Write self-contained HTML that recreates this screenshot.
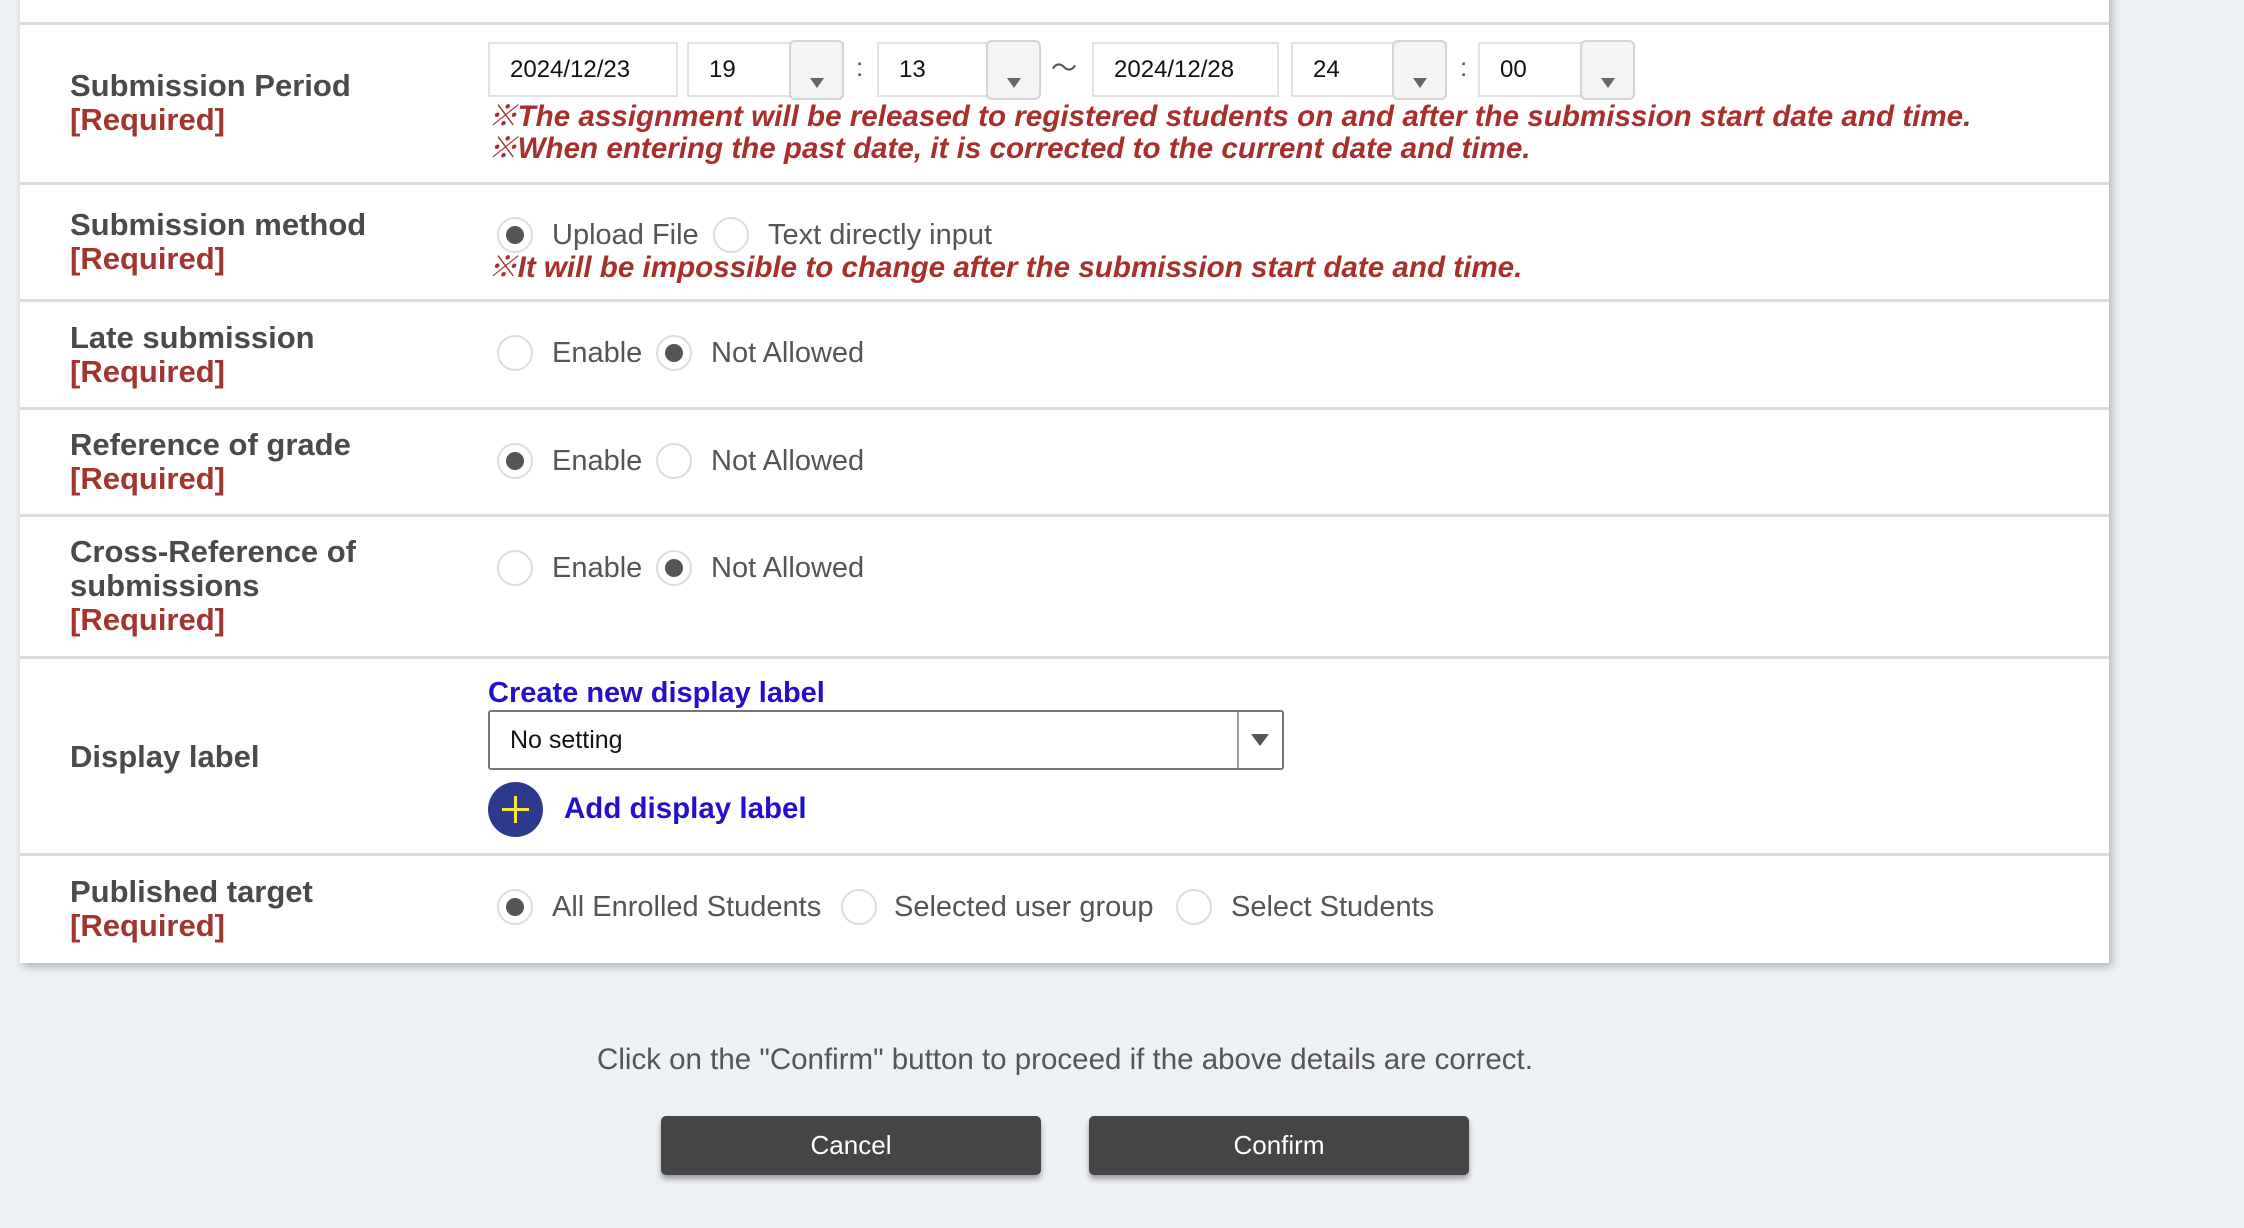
<!DOCTYPE html>
<html><head><meta charset="utf-8"><style>
*{box-sizing:border-box;margin:0;padding:0}
body{width:2244px;height:1228px;background:#edf1f5;position:relative;overflow:hidden;font-family:"Liberation Sans","Noto Sans CJK JP",sans-serif}
.panel{position:absolute;left:20px;top:-10px;width:2089px;height:973px;background:#fff;box-shadow:3px 4px 8px rgba(0,0,0,.25)}
.hr{position:absolute;left:20px;width:2089px;height:3px;background:#ddd}
.t{position:absolute;white-space:nowrap}
.lab{position:absolute;left:70px;font-size:31px;line-height:34px;color:#4a4a4a;font-weight:bold;white-space:nowrap}
.req{color:#a33530}
.note{position:absolute;left:488px;font-size:29.6px;line-height:32px;color:#a8302c;font-style:italic;font-weight:bold;white-space:nowrap}
.rad{position:absolute;width:36px;height:36px;border:2px solid #ddd;border-radius:50%;background:#fff}
.rad.on::after{content:"";position:absolute;left:7px;top:7px;width:18px;height:18px;border-radius:50%;background:#555}
.rl{position:absolute;font-size:29px;line-height:34px;color:#555;white-space:nowrap}
.inp{position:absolute;top:42px;height:55px;border:2px solid #e2e2e2;font-size:24px;line-height:51px;padding-left:20px;color:#111;background:#fff}
.btn{position:absolute;top:40px;height:60px;border:2px solid #d4d4d4;border-radius:6px;background:#f4f4f4}
.btn::after{content:"";position:absolute;left:50%;margin-left:-7px;bottom:10px;border-left:7px solid transparent;border-right:7px solid transparent;border-top:10px solid #666}
.sep{position:absolute;top:52px;font-size:26px;color:#555}
.bb{position:absolute;top:1116px;height:59px;width:380px;background:#454545;border-radius:5px;color:#fff;font-size:26px;line-height:59px;text-align:center;box-shadow:0 4px 6px rgba(0,0,0,.35)}
</style></head><body>
<div class="panel"></div>
<div class="hr" style="top:22px"></div>
<div class="hr" style="top:182px"></div>
<div class="hr" style="top:299px"></div>
<div class="hr" style="top:407px"></div>
<div class="hr" style="top:514px"></div>
<div class="hr" style="top:656px"></div>
<div class="hr" style="top:853px"></div>

<div class="lab" style="top:69px">Submission Period<br><span class="req">[Required]</span></div>
<div class="inp" style="left:488px;width:190px">2024/12/23</div>
<div class="inp" style="left:687px;width:157px">19</div><div class="btn" style="left:789px;width:55px"></div>
<div class="sep" style="left:856px">:</div>
<div class="inp" style="left:877px;width:163px">13</div><div class="btn" style="left:986px;width:55px"></div>
<div class="sep" style="left:1051px;top:48px">〜</div>
<div class="inp" style="left:1092px;width:187px">2024/12/28</div>
<div class="inp" style="left:1291px;width:156px">24</div><div class="btn" style="left:1392px;width:55px"></div>
<div class="sep" style="left:1460px">:</div>
<div class="inp" style="left:1478px;width:156px">00</div><div class="btn" style="left:1580px;width:55px"></div>
<div class="note" style="top:101px">※The assignment will be released to registered students on and after the submission start date and time.</div>
<div class="note" style="top:133px">※When entering the past date, it is corrected to the current date and time.</div>

<div class="lab" style="top:208px">Submission method<br><span class="req">[Required]</span></div>
<div class="rad on" style="left:497px;top:217px"></div><div class="rl" style="left:552px;top:218px">Upload File</div>
<div class="rad" style="left:713px;top:217px"></div><div class="rl" style="left:768px;top:218px">Text directly input</div>
<div class="note" style="top:252px">※It will be impossible to change after the submission start date and time.</div>

<div class="lab" style="top:321px">Late submission<br><span class="req">[Required]</span></div>
<div class="rad" style="left:497px;top:335px"></div><div class="rl" style="left:552px;top:336px">Enable</div>
<div class="rad on" style="left:656px;top:335px"></div><div class="rl" style="left:711px;top:336px">Not Allowed</div>

<div class="lab" style="top:428px">Reference of grade<br><span class="req">[Required]</span></div>
<div class="rad on" style="left:497px;top:443px"></div><div class="rl" style="left:552px;top:444px">Enable</div>
<div class="rad" style="left:656px;top:443px"></div><div class="rl" style="left:711px;top:444px">Not Allowed</div>

<div class="lab" style="top:535px">Cross-Reference of<br>submissions<br><span class="req">[Required]</span></div>
<div class="rad" style="left:497px;top:550px"></div><div class="rl" style="left:552px;top:551px">Enable</div>
<div class="rad on" style="left:656px;top:550px"></div><div class="rl" style="left:711px;top:551px">Not Allowed</div>

<div class="lab" style="top:740px">Display label</div>
<div class="t" style="left:488px;top:676px;font-size:29px;line-height:34px;font-weight:bold;color:#2211cc">Create new display label</div>
<div style="position:absolute;left:488px;top:710px;width:796px;height:60px;border:2px solid #777;border-radius:3px;background:#fff">
 <div style="position:absolute;left:20px;top:0;line-height:56px;font-size:25px;color:#111">No setting</div>
 <div style="position:absolute;right:0;top:0;width:45px;height:56px;border-left:2px solid #999"></div>
 <div style="position:absolute;right:13px;top:22px;border-left:9px solid transparent;border-right:9px solid transparent;border-top:12px solid #555"></div>
</div>
<div style="position:absolute;left:488px;top:782px;width:55px;height:55px;border-radius:50%;background:#2d3a8c">
 <div style="position:absolute;left:14px;top:26px;width:27px;height:3px;background:#f5e638"></div>
 <div style="position:absolute;left:26px;top:14px;width:3px;height:27px;background:#f5e638"></div>
</div>
<div class="t" style="left:564px;top:791px;font-size:29.5px;line-height:36px;font-weight:bold;color:#2211cc">Add display label</div>

<div class="lab" style="top:875px">Published target<br><span class="req">[Required]</span></div>
<div class="rad on" style="left:497px;top:889px"></div><div class="rl" style="left:552px;top:890px">All Enrolled Students</div>
<div class="rad" style="left:841px;top:889px"></div><div class="rl" style="left:894px;top:890px">Selected user group</div>
<div class="rad" style="left:1176px;top:889px"></div><div class="rl" style="left:1231px;top:890px">Select Students</div>

<div class="t" style="left:0;width:2130px;text-align:center;top:1043px;font-size:29.5px;line-height:34px;color:#555">Click on the "Confirm" button to proceed if the above details are correct.</div>
<div class="bb" style="left:661px">Cancel</div>
<div class="bb" style="left:1089px">Confirm</div>
</body></html>
